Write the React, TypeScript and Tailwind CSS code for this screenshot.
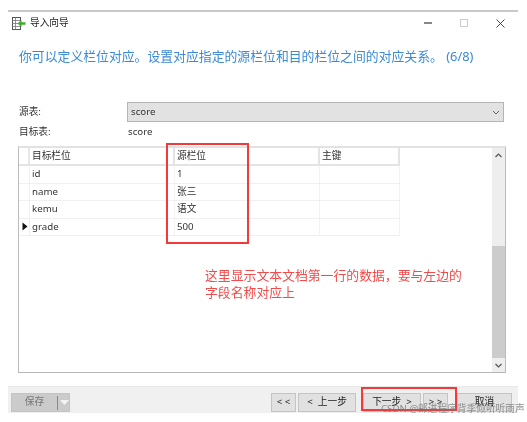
const font = '"Noto Sans","Noto Sans CJK SC",sans-serif';

function Cell({ w, children, header }: { w: string; children?: React.ReactNode; header?: boolean }) {
  return (
    <div className={`${w} shrink-0 flex items-center pl-[2px] pt-[1px] ${header ? "border-r-2 border-[#e4e4e4]" : "border-r border-[#f2f2f2]"} text-[9.7px] text-[#333]`}>
      {children}
    </div>
  );
}

function Row({ a, b, mark }: { a: string; b: string; mark?: boolean }) {
  return (
    <div className="flex w-[381px] h-[17.5px] border-b border-[#f0f0f0]">
      <div className="w-[11px] shrink-0 flex items-center justify-end pr-[1px] border-r border-[#f0f0f0]">
        {mark && (
          <svg width="6" height="9" viewBox="0 0 6 9"><path d="M0.5 0.5 L5.5 4.5 L0.5 8.5 Z" fill="#111" /></svg>
        )}
      </div>
      <Cell w="w-[145px]">{a}</Cell>
      <Cell w="w-[145px]">{b}</Cell>
      <Cell w="w-[80px]" />
    </div>
  );
}

function Btn({ w, children, ml }: { w: string; ml: string; children: React.ReactNode }) {
  return (
    <div className={`${w} ${ml} h-[19px] shrink-0 flex items-center justify-center bg-[#e1e1e1] border border-[#c4c4c4] text-[9.7px] text-[#222] whitespace-pre`}>
      {children}
    </div>
  );
}

export default function App() {
  return (
    <div className="relative w-[527px] h-[422px] overflow-hidden bg-white pt-[10px] pl-[8px] blur-[0.3px]" style={{ fontFamily: font }}>
      <div className="w-[510px] h-[403px] flex flex-col border-t-2 border-[#c9c9c9]">
        <div className="h-[22px] flex items-center pl-[4px] shrink-0">
          <svg width="14" height="13" viewBox="0 0 14 13">
            <rect x="0.5" y="0.5" width="8" height="12" fill="#fff" stroke="#555" />
            <path d="M0.5 3.5H8.5M0.5 6.5H8.5M0.5 9.5H8.5M3.5 0.5V12.5" stroke="#777" strokeWidth="0.8" />
            <path d="M13.5 5.2H9.5V3L5.5 6.5L9.5 10V7.8H13.5Z" fill="#3fae2a" />
          </svg>
          <span className="ml-[4px] text-[9.7px] text-[#222]">导入向导</span>
          <div className="ml-auto flex items-center pr-[13px]">
            <div className="w-[8px] h-[2px] bg-[#888]" />
            <div className="ml-[28px] w-[8px] h-[8px] border border-[#ccc]" />
            <svg className="ml-[28px]" width="9" height="9" viewBox="0 0 9 9"><path d="M0.5 0.5L8.5 8.5M8.5 0.5L0.5 8.5" stroke="#333" strokeWidth="0.9" /></svg>
          </div>
        </div>

        <div className="h-[24px] mt-[11px] pl-[11px] flex items-center text-[12.85px] text-[#3a8ad8] whitespace-nowrap shrink-0">
          你可以定义栏位对应。设置对应指定的源栏位和目的栏位之间的对应关系。 (6/8)
        </div>

        <div className="mt-[33px] pl-[11px] flex items-center h-[20px] shrink-0">
          <span className="w-[108px] text-[9.7px] text-[#333]">源表:</span>
          <div className="w-[377px] h-[20px] bg-[#e2e2e2] border border-[#b5b5b5] flex items-center pl-[3px] text-[9.7px] text-[#333]">
            score
            <svg className="ml-auto mr-[3px]" width="8" height="5" viewBox="0 0 8 5"><path d="M1 1L4 4L7 1" fill="none" stroke="#666" strokeWidth="1" /></svg>
          </div>
        </div>
        <div className="mt-[1px] pl-[11px] flex items-center h-[18px] shrink-0 text-[9.7px] text-[#333]">
          <span className="w-[109px]">目标表:</span>
          <span>score</span>
        </div>

        <div className="ml-[10px] mt-[5px] w-[488px] h-[227px] shrink-0 flex border-t-2 border-[#e2e2e2] border-l border-r border-b border-l-[#bbb] border-r-[#bbb] border-b-[#b5b5b5]">
          <div className="flex-1">
            <div className="flex w-[381px] h-[18px] border-b-2 border-[#e4e4e4]">
              <div className="w-[11px] shrink-0 border-r-2 border-[#e8e8e8]" />
              <Cell w="w-[145px]" header>目标栏位</Cell>
              <Cell w="w-[145px]" header>源栏位</Cell>
              <Cell w="w-[80px]" header>主键</Cell>
            </div>
            <Row a="id" b="1" />
            <Row a="name" b="张三" />
            <Row a="kemu" b="语文" />
            <Row a="grade" b="500" mark />
          </div>
          <div className="w-[13px] shrink-0 bg-[#eeeeee] flex flex-col items-center">
            <div className="h-[14px] flex items-center justify-center shrink-0">
              <svg width="7" height="5" viewBox="0 0 7 5"><path d="M0.5 4L3.5 1L6.5 4" fill="none" stroke="#555" strokeWidth="1.2" /></svg>
            </div>
            <div className="mt-[84px] w-full h-[112px] bg-[#cccccc] shrink-0" />
            <div className="h-[14px] flex items-center justify-center shrink-0">
              <svg width="7" height="5" viewBox="0 0 7 5"><path d="M0.5 1L3.5 4L6.5 1" fill="none" stroke="#555" strokeWidth="1.2" /></svg>
            </div>
          </div>
        </div>

        <div className="mt-[13px] flex-1 bg-[#f0f0f0] border-t border-[#e8e8e8] flex pt-[6px] pl-[3px] overflow-hidden">
          <div className="w-[59px] h-[19px] shrink-0 bg-[#cbcbcb] border border-[#c4c4c4] flex items-center text-[9.7px] text-[#777]">
            <span className="w-[45px] text-center">保存</span>
            <div className="w-px h-[14px] bg-[#888]" />
            <svg className="ml-[2px]" width="9" height="5" viewBox="0 0 9 5"><path d="M0 0H9L4.5 5Z" fill="#f4f4f4" /></svg>
          </div>
          <Btn w="w-[25px]" ml="ml-[201px]">{"< <"}</Btn>
          <Btn w="w-[58px]" ml="ml-[2px]">{"<  上一步"}</Btn>
          <Btn w="w-[58px]" ml="ml-[7px]">{"下一步  >"}</Btn>
          <Btn w="w-[25px]" ml="ml-[2px]">{"> >"}</Btn>
          <Btn w="w-[55px]" ml="ml-[9px]">取消</Btn>
        </div>
      </div>

      <div className="absolute left-[166px] top-[143px] w-[83px] h-[101px] border-2 border-[#f23a3a]" />
      <div className="absolute left-[361px] top-[387px] w-[96px] h-[24px] border-2 border-[#f23a3a]" />
      <div className="absolute left-[205px] top-[266.5px] text-[12.85px] leading-[17px] text-[#f34a4a] whitespace-nowrap">
        这里显示文本文档第一行的数据，要与左边的<br />字段名称对应上
      </div>
      <div className="absolute left-[381px] top-[402px] text-[9.7px] leading-[13px] text-[#777] opacity-80 whitespace-nowrap">
        CSDN @邮进程序背季倾听听雨声
      </div>
    </div>
  );
}
